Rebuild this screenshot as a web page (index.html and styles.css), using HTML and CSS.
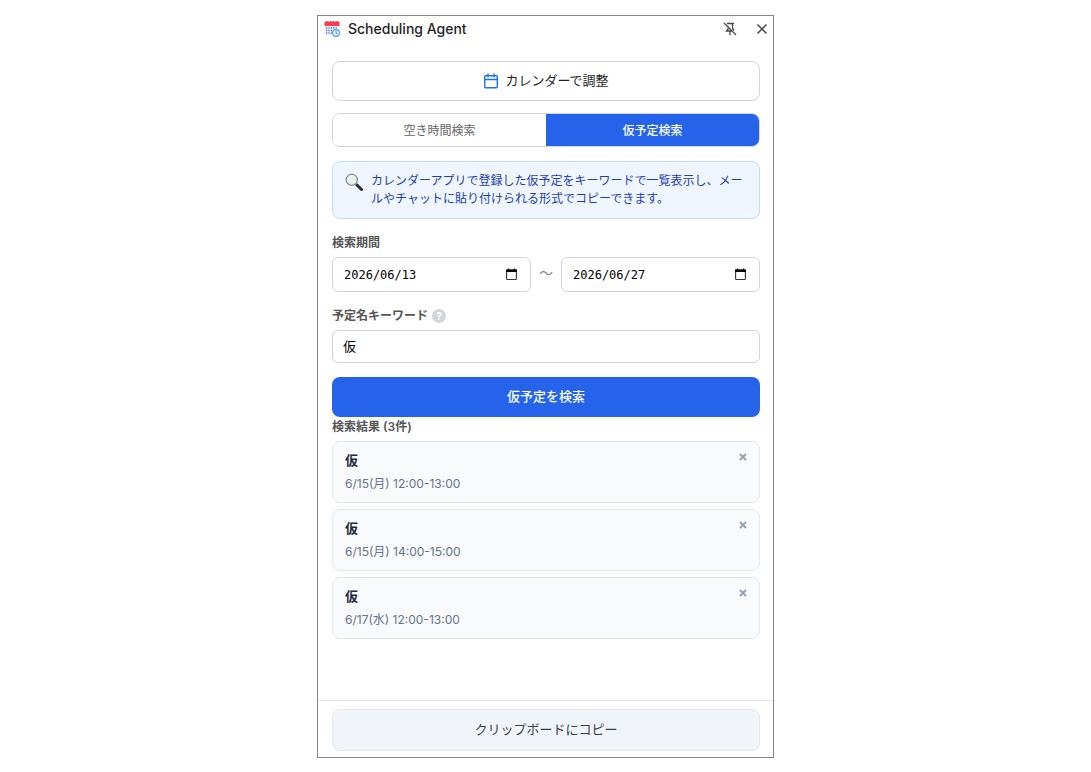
FILE: index.html
```html
<!DOCTYPE html>
<html lang="ja">
<head>
    <meta charset="UTF-8">
    <meta name="viewport" content="width=device-width, initial-scale=1.0">
    <title>Scheduling Agent</title>
    <link rel="stylesheet" href="styles.css">
</head>
<body>
    <div class="panel">
        <header class="panel-header">
            <svg class="logo" viewBox="0 0 16 16" aria-hidden="true">
                <rect x="0.5" y="1" width="15" height="13" rx="1" fill="#eef2fb"/>
                <path d="M1 .5h14a.5.5 0 0 1 .5.500V5H.5V1A.5.500 0 0 1 1 .5z" fill="#fb3c52"/>
                <path d="M3.500 0v2M6.500 0v2M9.500 0v2M12.500 0v2" stroke="#d8435a" stroke-width="0.900"/>
                <path d="M2 7h12M2 9.500h7M2 12h6" stroke="#5b79bd" stroke-width="1.300" stroke-dasharray="1.300 1.100"/>
                <circle cx="12" cy="12" r="3.400" fill="#e4f2ff" stroke="#4fa3f5" stroke-width="1.200"/>
                <path d="M12 10v2.200l1.300.6" fill="none" stroke="#3f6fa8" stroke-width="0.800"/>
            </svg>
            <h1>Scheduling Agent</h1>
            <button class="icon-btn" type="button" aria-label="固定を解除">
                <svg width="14" height="14" viewBox="0 0 14 14" fill="none" stroke="#474747" stroke-width="1.300">
                    <path d="M4 1.500h7M9.500 1.500v5l1.500 2M5 4v3L3.500 9H9M7 9v4M1 1l12 12"/>
                </svg>
            </button>
            <button class="icon-btn" type="button" aria-label="閉じる">
                <svg width="14" height="14" viewBox="0 0 14 14" fill="none" stroke="#474747" stroke-width="1.500">
                    <path d="M2.500 2.500l9 9M11.500 2.500l-9 9"/>
                </svg>
            </button>
        </header>

        <main class="content">
            <button class="calendar-btn" type="button">
                <svg width="16" height="16" viewBox="0 0 16 16" fill="none" stroke="#1a73e8" stroke-width="1.400">
                    <rect x="1.700" y="2.700" width="12.600" height="12" rx="1"/>
                    <path d="M1.700 6.500h12.600M5 .5v4M11 .5v4"/>
                </svg>
                <span>カレンダーで調整</span>
            </button>

            <div class="tabs">
                <button class="tab" type="button">空き時間検索</button>
                <button class="tab active" type="button">仮予定検索</button>
            </div>

            <div class="info">
                <svg class="info-icon" viewBox="0 0 18 18" aria-hidden="true">
                    <path d="M10.500 10.500l2 2" stroke="#8a8a8a" stroke-width="2"/>
                    <path d="M12.200 12.200l4.300 4.300" stroke="#2b2b2b" stroke-width="3" stroke-linecap="round"/>
                    <circle cx="6.800" cy="6.800" r="5.600" fill="#e6ecef" stroke="#8b8f92" stroke-width="1.300"/>
                    <path d="M3.500 6.500a3.500 3.500 0 0 1 3-3" stroke="#fff" stroke-width="1.200" fill="none"/>
                </svg>
                <p>カレンダーアプリで登録した仮予定をキーワードで一覧表示し、メールやチャットに貼り付けられる形式でコピーできます。</p>
            </div>

            <label class="label" for="date-from">検索期間</label>
            <div class="date-range">
                <div class="date-field">
                    <input id="date-from" type="text" value="2026/06/13">
                    <button type="button" aria-label="開始日を選択">
                        <svg width="13" height="13" viewBox="0 0 13 13">
                            <path d="M3.500 .5v2M9.500 .5v2" stroke="#000" stroke-width="1.200"/>
                            <rect x="1.600" y="2" width="9.800" height="9.500" rx="0.800" fill="none" stroke="#333" stroke-width="1.100"/>
                            <path d="M1 1.500h11v2.500H1z"/>
                        </svg>
                    </button>
                </div>
                <span class="tilde">〜</span>
                <div class="date-field">
                    <input id="date-to" type="text" value="2026/06/27" aria-label="終了日">
                    <button type="button" aria-label="終了日を選択">
                        <svg width="13" height="13" viewBox="0 0 13 13">
                            <path d="M3.500 .5v2M9.500 .5v2" stroke="#000" stroke-width="1.200"/>
                            <rect x="1.600" y="2" width="9.800" height="9.500" rx="0.800" fill="none" stroke="#333" stroke-width="1.100"/>
                            <path d="M1 1.500h11v2.500H1z"/>
                        </svg>
                    </button>
                </div>
            </div>

            <div class="label-row">
                <label class="label" for="keyword">予定名キーワード</label>
                <span class="help">?</span>
            </div>
            <input class="keyword" id="keyword" type="text" value="仮">

            <button class="search-btn" type="button">仮予定を検索</button>

            <h2 class="label results-title">検索結果 (3件)</h2>
            <ul class="results">
                <li class="card">
                    <div>
                        <h3>仮</h3>
                        <p>6/15(月) 12:00-13:00</p>
                    </div>
                    <button class="remove" type="button" aria-label="削除"><svg width="8" height="8" viewBox="0 0 8 8"><path d="M1 1l6 6M7 1L1 7"/></svg></button>
                </li>
                <li class="card">
                    <div>
                        <h3>仮</h3>
                        <p>6/15(月) 14:00-15:00</p>
                    </div>
                    <button class="remove" type="button" aria-label="削除"><svg width="8" height="8" viewBox="0 0 8 8"><path d="M1 1l6 6M7 1L1 7"/></svg></button>
                </li>
                <li class="card">
                    <div>
                        <h3>仮</h3>
                        <p>6/17(水) 12:00-13:00</p>
                    </div>
                    <button class="remove" type="button" aria-label="削除"><svg width="8" height="8" viewBox="0 0 8 8"><path d="M1 1l6 6M7 1L1 7"/></svg></button>
                </li>
            </ul>
        </main>

        <footer class="panel-footer">
            <button class="copy-btn" type="button">クリップボードにコピー</button>
        </footer>
    </div>
</body>
</html>
```
FILE: styles.css
```css
* {
    box-sizing: border-box;
}
body {
    margin: 0;
    padding: 15px 0 14px;
    background: #fff;
    color: #1f1f1f;
    font-family: Inter, "Noto Sans CJK JP", sans-serif;
    font-size: 12px;
    line-height: 18px;
}
button, input {
    font-family: inherit;
    margin: 0;
}
button {
    cursor: pointer;
    padding: 0;
}
h1, h2, h3, p, ul {
    margin: 0;
    padding: 0;
}
.panel {
    display: flex;
    flex-direction: column;
    max-width: 457px;
    min-height: calc(100vh - 29px);
    margin: 0 auto;
    border: 1px solid #868686;
}
.panel-header {
    display: flex;
    align-items: center;
    gap: 8px;
    height: 26px;
    padding: 0 4px 0 6px;
}
.logo {
    width: 16px;
    height: 16px;
}
.panel-header h1 {
    flex: 1;
    font-size: 14px;
    font-weight: 500;
}
.icon-btn {
    display: flex;
    border: none;
    background: none;
}
.icon-btn + .icon-btn {
    margin-left: 10px;
}
.content {
    display: flex;
    flex-direction: column;
    flex: 1;
    padding: 19px 13px 18px 14px;
}
.calendar-btn {
    display: flex;
    align-items: center;
    justify-content: center;
    gap: 6px;
    height: 40px;
    margin-bottom: 12px;
    border: 1px solid #d1d5db;
    border-radius: 8px;
    background: #fff;
    color: #1f1f1f;
    font-size: 13px;
}
.calendar-btn span {
    padding-bottom: 4px;
}
.tabs {
    display: flex;
    height: 34px;
    margin-bottom: 14px;
    border: 1px solid #d1d5db;
    border-radius: 8px;
    overflow: hidden;
}
.tab {
    flex: 1;
    padding-bottom: 2px;
    border: none;
    background: #fff;
    color: #666;
    font-size: 12px;
}
.tab.active {
    background: #2563eb;
    color: #fff;
    font-weight: 500;
}
.info {
    display: flex;
    gap: 8px;
    margin-bottom: 15px;
    padding: 10px 12px;
    border: 1px solid #bfdbfe;
    border-radius: 8px;
    background: #eff6ff;
    color: #1e40af;
}
.info p {
    flex: 1;
}
.info-icon {
    width: 18px;
    height: 18px;
    margin-top: 1px;
}
.label {
    color: #555;
    font-size: 12px;
    font-weight: 600;
}
.date-range {
    display: flex;
    align-items: center;
    gap: 8px;
    margin: 5px 0 15px;
}
.date-field {
    display: flex;
    align-items: center;
    flex: 1;
    height: 35px;
    padding: 0 12px 0 11px;
    border: 1px solid #d1d5db;
    border-radius: 6px;
}
.date-field input {
    flex: 1;
    min-width: 0;
    padding: 0;
    border: none;
    outline: none;
    background: none;
    color: #000;
    font-family: "DejaVu Sans Mono", monospace;
    font-size: 12px;
}
.date-field button {
    display: flex;
    border: none;
    background: none;
}
.tilde {
    width: 14px;
    padding-bottom: 4px;
    color: #888;
    font-size: 14px;
}
.label-row {
    display: flex;
    align-items: center;
    gap: 4px;
    margin-bottom: 5px;
}
.help {
    width: 14px;
    height: 14px;
    border-radius: 50%;
    background: #d1d5db;
    color: #fff;
    font-size: 10px;
    font-weight: 700;
    line-height: 14px;
    text-align: center;
}
.keyword {
    height: 33px;
    margin-bottom: 14px;
    padding: 0 10px 3px;
    border: 1px solid #d1d5db;
    border-radius: 6px;
    color: #000;
    font-size: 13px;
}
.search-btn {
    height: 40px;
    padding-bottom: 4px;
    border: none;
    border-radius: 8px;
    background: #2563eb;
    color: #fff;
    font-size: 13px;
    font-weight: 500;
}
.results-title {
    line-height: 20px;
}
.results {
    display: flex;
    flex-direction: column;
    gap: 6px;
    margin-top: 4px;
    list-style: none;
}
.card {
    display: flex;
    align-items: flex-start;
    justify-content: space-between;
    height: 62px;
    padding: 9px 12px;
    border: 1px solid #e2e8f0;
    border-radius: 8px;
    background: #f8fafc;
}
.card h3 {
    margin-bottom: 6px;
    color: #1e293b;
    font-size: 13px;
    font-weight: 600;
}
.card p {
    color: #64748b;
}
.remove {
    display: flex;
    margin-top: 2px;
    border: none;
    background: none;
}
.remove path {
    stroke: #94a3b8;
    stroke-width: 2;
}
.panel-footer {
    padding: 8px 13px 6px 14px;
    border-top: 1px solid #e5e7eb;
}
.copy-btn {
    width: 100%;
    height: 42px;
    padding-bottom: 4px;
    border: 1px solid #e2e8f0;
    border-radius: 8px;
    background: #f1f5f9;
    color: #334155;
    font-size: 13px;
}
```
